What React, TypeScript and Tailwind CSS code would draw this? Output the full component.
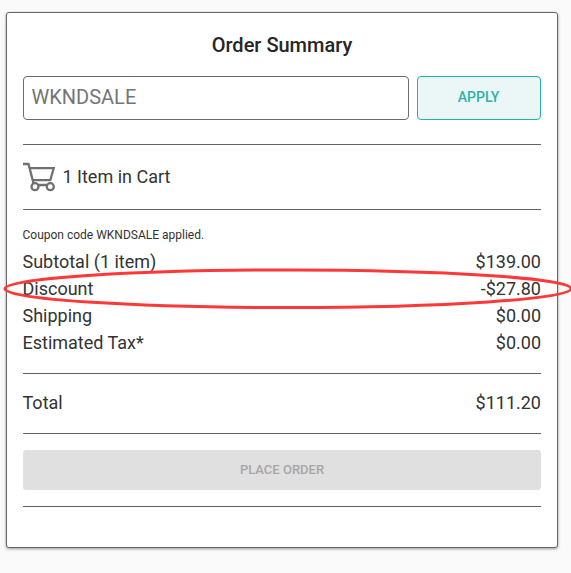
import React from "react";

const rows = [
  ["Subtotal (1 item)", "$139.00"],
  ["Discount", "-$27.80"],
  ["Shipping", "$0.00"],
  ["Estimated Tax*", "$0.00"],
];

export default function App() {
  return (
    <div className="relative h-[573px] w-[571px] overflow-hidden bg-[#fafafa] pl-[6px] pt-3 font-['Roboto',sans-serif] text-[#333333]">
      <main className="flex h-[536px] w-[552px] flex-col rounded-[3px] border border-[#666] bg-white px-4 shadow-[0_1px_3px_rgba(0,0,0,0.4)]">
        <h1 className="mt-[18px] h-7 text-center text-[20px] leading-7 font-medium text-[#262626]">Order Summary</h1>
        <div className="mt-[17px] flex h-11 gap-2">
          <input aria-label="Coupon code" defaultValue="WKNDSALE" className="w-[386px] rounded-[4px] border border-[#6b6b6b] bg-white pr-2 pb-[2px] pl-[7.5px] text-[20px] text-[#757575] outline-none" />
          <button className="flex-1 rounded-[4px] border border-[#1fb5a8] bg-[#ebf7f7] pr-[2px] pb-[2px] pl-px text-[14px] font-medium text-[#2bb3a8]">APPLY</button>
        </div>
        <section className="mt-6 flex h-[66px] items-center gap-[7.5px] border-y border-[#616161]">
          <svg width="32" height="30" viewBox="0 0 32 30" fill="none" stroke="#707070" strokeWidth="2.3">
            <path d="M0 2h5.5l5.2 20M7 6.2h23.7l-3.4 12H10M14.5 23h10" />
            <circle cx="12" cy="24.7" r="3.5" />
            <circle cx="27.3" cy="24.7" r="3.5" />
          </svg>
          <span className="pb-[2px] text-[18px]">1 Item in Cart</span>
        </section>
        <p className="mt-[17px] -ml-[0.5px] h-[21px] text-[12px] leading-4">Coupon code WKNDSALE applied.</p>
        <dl>
          {rows.map(([label, value]) => (
            <div key={label} className="-ml-[0.5px] flex h-[27px] items-center justify-between text-[18px]"><dt>{label}</dt><dd>{value}</dd></div>
          ))}
        </dl>
        <div className="mt-[17px] flex h-[61px] items-center justify-between border-y border-[#616161] pb-[2px] text-[18px]"><span className="-ml-[0.5px]">Total</span><span>$111.20</span></div>
        <button className="mt-4 h-10 rounded-[3px] bg-[#e0e0e0] text-[13px] font-medium text-[#a6a6a6]">PLACE ORDER</button>
        <div className="mt-4 border-t border-[#616161]" />
      </main>
      <svg className="pointer-events-none absolute left-0 top-0" width="571" height="573" fill="none">
        <ellipse cx="288" cy="288.7" rx="283" ry="18.8" stroke="#fc3838" strokeWidth="3" />
      </svg>
    </div>
  );
}
